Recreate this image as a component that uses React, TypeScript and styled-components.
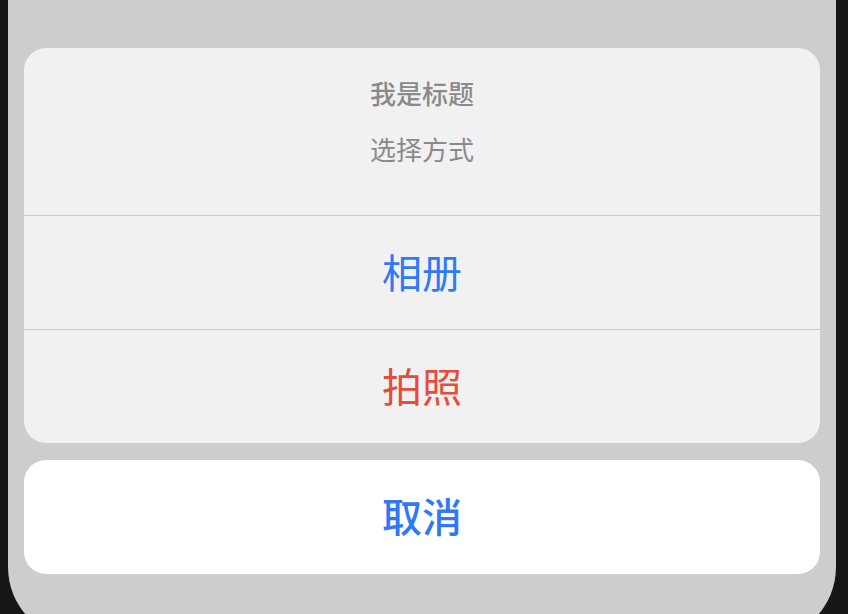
import React from "react";
import styled, { createGlobalStyle } from "styled-components";

const GlobalStyle = createGlobalStyle`
  html, body {
    margin: 0;
    padding: 0;
    height: 100%;
    overflow: hidden;
    background: #161616;
  }
  body {
    font-family: "Noto Sans CJK SC", "Noto Sans", sans-serif;
  }
`;

const Screen = styled.div`
  margin: 0 12px 0 8px;
  height: 640px;
  background: #cdcdcd;
  border-radius: 0 0 73px 73px;
  padding: 48px 16px 0 16px;
  box-sizing: border-box;
  display: flex;
  flex-direction: column;
  gap: 17px;
`;

const Sheet = styled.div<{ $white?: boolean }>`
  background: ${(p) => (p.$white ? "#ffffff" : "#f1f1f1")};
  border-radius: 22px;
  overflow: hidden;
  display: flex;
  flex-direction: column;
`;

const Header = styled.div`
  height: 167px;
  box-sizing: border-box;
  padding-top: 27px;
  display: flex;
  flex-direction: column;
  align-items: center;
  gap: 20px;
  color: #8a8a8a;
`;

const Title = styled.div`
  font-size: 26px;
  line-height: 36px;
  font-weight: 500;
`;

const Subtitle = styled.div`
  font-size: 26px;
  line-height: 36px;
  font-weight: 400;
`;

const Option = styled.div<{ $color: string; $bold?: boolean; $divider?: boolean }>`
  height: 114px;
  box-sizing: border-box;
  padding-bottom: 4px;
  border-top: ${(p) => (p.$divider ? "1px solid #c9c9c9" : "none")};
  display: flex;
  align-items: center;
  justify-content: center;
  font-size: 40px;
  font-weight: ${(p) => (p.$bold ? 500 : 400)};
  color: ${(p) => p.$color};
`;

export default function App() {
  return (
    <>
      <GlobalStyle />
      <Screen>
        <Sheet>
          <Header>
            <Title>我是标题</Title>
            <Subtitle>选择方式</Subtitle>
          </Header>
          <Option $divider $color="#3079f5">相册</Option>
          <Option $divider $color="#e84b3c">拍照</Option>
        </Sheet>
        <Sheet $white>
          <Option $bold $color="#3079f5">取消</Option>
        </Sheet>
      </Screen>
    </>
  );
}
